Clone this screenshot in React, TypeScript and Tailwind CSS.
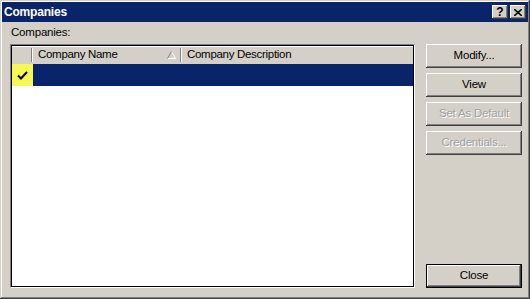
const font = { fontFamily: '"Liberation Sans", Arial, sans-serif' };

const raised =
  'shadow-[inset_-1px_-1px_#404040,inset_1px_1px_#ffffff,inset_-2px_-2px_#808080,inset_2px_2px_#d4d0c8]';

const Button = ({ label, disabled, isDefault }: { label: string; disabled?: boolean; isDefault?: boolean }) => {
  return (
    <div className={`w-[96px] h-[24px] ${isDefault ? 'border border-black' : ''}`}>
      <div className={`w-full h-full flex items-center justify-center bg-[#d4d0c8] ${raised}`}>
        <span
          className={`text-[11.5px] tracking-[-0.2px] ${disabled ? 'text-[#a0a0a0] [text-shadow:1px_1px_#ffffff]' : 'text-black'}`}
        >
          {label}
        </span>
      </div>
    </div>
  );
};

const CaptionButton = ({ children }: { children: React.ReactNode }) => (
  <div
    className={`w-[16px] h-[14px] bg-[#d4d0c8] flex items-center justify-center text-black text-[12px] font-bold leading-none ${raised}`}
  >
    {children}
  </div>
);

const HeaderCell = ({ label, width, sort, last }: { label?: string; width: string; sort?: boolean; last?: boolean }) => (
  <div className={`${width} h-full flex items-center`}>
    <div className="flex-1 flex items-center justify-between pl-[5px] pr-[4px]">
      <span className="text-[11.5px] tracking-[-0.3px] text-black whitespace-nowrap">{label}</span>
      {sort && (
        <svg width="9" height="8" viewBox="0 0 9 8">
          <path d="M4.5 0.5 L8.5 7.5" stroke="#ffffff" fill="none" />
          <path d="M0.5 7.5 L8.5 7.5" stroke="#ffffff" fill="none" />
          <path d="M4.5 0.5 L0.5 7.5" stroke="#808080" fill="none" />
        </svg>
      )}
    </div>
    {!last && <div className="w-[2px] h-[14px] border-l border-[#808080] border-r border-r-white" />}
  </div>
);

export default function App() {
  return (
    <div
      style={font}
      className="w-[530px] h-[299px] bg-[#d4d0c8] flex flex-col p-[2px] shadow-[inset_-1px_-1px_#404040,inset_1px_1px_#d4d0c8,inset_-2px_-2px_#808080,inset_2px_2px_#ffffff]"
    >
      <div className="h-[20px] bg-[#0a246a] flex items-center justify-between pl-[2px] pr-[2px]">
        <span className="text-white font-bold text-[12px] tracking-[-0.2px]">Companies</span>
        <div className="flex items-center gap-[2px]">
          <CaptionButton>?</CaptionButton>
          <CaptionButton>
            <svg width="8" height="7" viewBox="0 0 8 7">
              <path d="M0 0 L8 7 M8 0 L0 7" stroke="#000" strokeWidth="1.6" />
            </svg>
          </CaptionButton>
        </div>
      </div>

      <div className="flex-1 flex pl-[8px] pr-[6px] pt-[5px] pb-[9px] gap-[11px]">
        <div className="flex flex-col w-[405px]">
          <span className="text-[11.5px] tracking-[-0.2px] text-black h-[17px] leading-[11px] pl-[1px]">Companies:</span>
          <div className="flex-1 border-t border-l border-[#808080] border-b border-r border-b-white border-r-white">
            <div className="w-full h-full bg-white border border-black flex flex-col">
              <div className="h-[18px] bg-[#d4d0c8] flex shadow-[inset_0_1px_#ffffff]">
                <HeaderCell width="w-[21px]" />
                <HeaderCell width="w-[149px]" label="Company Name" sort />
                <HeaderCell width="flex-1" label="Company Description" last />
              </div>
              <div className="h-[22px] flex">
                <div className="w-[21px] h-full bg-[#f8f854] flex items-center justify-center">
                  <svg width="11" height="9" viewBox="0 0 11 9">
                    <path d="M1 4.5 L4 7.5 L10 1" stroke="#000" strokeWidth="2" fill="none" />
                  </svg>
                </div>
                <div className="flex-1 h-full bg-[#0a246a]" />
              </div>
            </div>
          </div>
        </div>

        <div className="flex flex-col justify-between pt-[17px]">
          <div className="flex flex-col gap-[5px]">
            <Button label="Modify..." />
            <Button label="View" />
            <Button label="Set As Default" disabled />
            <Button label="Credentials..." disabled />
          </div>
          <Button label="Close" isDefault />
        </div>
      </div>
    </div>
  );
}
